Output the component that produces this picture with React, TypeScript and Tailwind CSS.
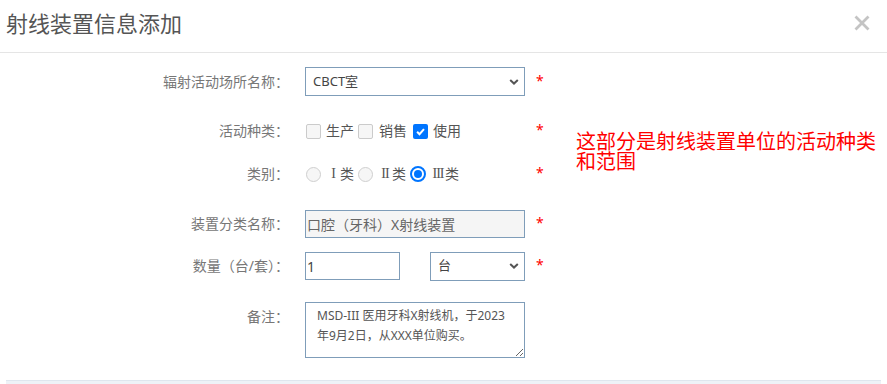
import React, { FC } from 'react';

const FONT = { fontFamily: '"Noto Sans", "Noto Sans CJK SC", sans-serif' };

const Req: FC = () => (
  <span className="ml-[11px] text-[14px] leading-[20px] text-[#ff0000] self-center -mt-[2px]">*</span>
);

const Label: FC<{ children: React.ReactNode; className?: string }> = ({ children, className }) => (
  <div className={`w-[289px] shrink-0 text-right text-[14px] leading-[20px] text-[#777777] ${className || ''}`}>
    {children}
  </div>
);

const CheckBox: FC<{ checked?: boolean }> = ({ checked }) =>
  checked ? (
    <span className="w-[15px] h-[15px] rounded-[2px] bg-[#0075ff] flex items-center justify-center shrink-0">
      <svg width="11" height="11" viewBox="0 0 12 12">
        <path d="M2.3 6.3 L4.9 8.9 L9.8 3.4" stroke="white" strokeWidth="2.2" fill="none" />
      </svg>
    </span>
  ) : (
    <span className="block w-[15px] h-[15px] rounded-[2px] border border-[#cbcbcb] bg-[#f6f6f6] shrink-0" />
  );

const Radio: FC<{ checked?: boolean }> = ({ checked }) =>
  checked ? (
    <span className="w-[16px] h-[16px] rounded-full border-2 border-[#0075ff] bg-white flex items-center justify-center shrink-0">
      <span className="block w-[8px] h-[8px] rounded-full bg-[#0075ff]" />
    </span>
  ) : (
    <span className="block w-[15px] h-[15px] rounded-full border border-[#cfcfcf] bg-[#f6f6f6] shrink-0" />
  );

// roman numerals drawn as serif letters, each in a fixed cell like a full-width glyph
const Roman: FC<{ n: string; w: string }> = ({ n, w }) => (
  <span
    className={`inline-block ${w} text-center tracking-[-1px]`}
    style={{ fontFamily: '"Liberation Serif", serif' }}
  >
    {n}
  </span>
);

const Chevron: FC = () => (
  <svg
    width="10"
    height="7"
    viewBox="0 0 10 7"
    className="absolute right-[5px] top-1/2 -translate-y-1/2 pointer-events-none"
  >
    <path d="M1.2 1.4 L5 5 L8.8 1.4" stroke="#555" strokeWidth="2" fill="none" />
  </svg>
);

const SelectBox: FC<{ value: string; width: string }> = ({ value, width }) => (
  <div className={`relative h-[29px] ${width} border border-[#7f9db9] bg-white`}>
    <div className="h-full flex items-center pl-[7px] text-[13px] text-[#444444]">{value}</div>
    <Chevron />
  </div>
);

export default function App() {
  return (
    <div className="relative w-[887px] h-[384px] overflow-hidden bg-white" style={FONT}>
      {/* header */}
      <div className="h-[53px] border-b border-[#e5e5e5] flex justify-between items-start">
        <div
          className="pl-[6px] pt-[8px] text-[22px] leading-[28px] text-[#555555]"
          style={{ fontFamily: '"Noto Sans CJK SC", sans-serif' }}
        >
          射线装置信息添加
        </div>
        <svg width="16" height="16" viewBox="0 0 16 16" className="mt-[15px] mr-[17px]">
          <path d="M1.5 1.5 L14.5 14.5 M14.5 1.5 L1.5 14.5" stroke="#c4c4c4" strokeWidth="2.8" />
        </svg>
      </div>

      <div className="flex flex-col pt-[14px]">
        {/* 辐射活动场所名称 */}
        <div className="flex items-center h-[29px]">
          <Label>辐射活动场所名称：</Label>
          <div className="ml-[16px]">
            <SelectBox value="CBCT室" width="w-[220px]" />
          </div>
          <Req />
        </div>

        {/* 活动种类 */}
        <div className="flex items-center h-[28px] mt-[21px]">
          <Label>活动种类：</Label>
          <div className="ml-[16px] w-[220px] flex items-center text-[14px] leading-[20px] text-[#555555]">
            <span className="ml-[1px]"><CheckBox /></span>
            <span className="ml-[5px]">生产</span>
            <span className="ml-[4px]"><CheckBox /></span>
            <span className="ml-[6px]">销售</span>
            <span className="ml-[6px]"><CheckBox checked /></span>
            <span className="ml-[5px]">使用</span>
          </div>
          <Req />
        </div>

        {/* 类别 */}
        <div className="flex items-center h-[28px] mt-[15px]">
          <Label>类别：</Label>
          <div className="ml-[16px] w-[220px] flex items-center text-[14px] leading-[20px] text-[#555555]">
            <span className="ml-[1px]"><Radio /></span>
            <span className="ml-[5px] flex items-center"><Roman n="I" w="w-[14px]" />类</span>
            <span className="ml-[4px]"><Radio /></span>
            <span className="ml-[5px] flex items-center"><Roman n="II" w="w-[14px]" />类</span>
            <span className="ml-[4px]"><Radio checked /></span>
            <span className="ml-[5px] flex items-center"><Roman n="III" w="w-[14px]" />类</span>
          </div>
          <Req />
        </div>

        {/* 装置分类名称 */}
        <div className="flex items-center h-[28px] mt-[22px]">
          <Label>装置分类名称：</Label>
          <div className="ml-[16px] w-[220px] h-[28px] border border-[#7f9db9] bg-[#f5f5f5] flex items-center pl-[1px] text-[14px] text-[#666666]">
            口腔（牙科）X射线装置
          </div>
          <Req />
        </div>

        {/* 数量 */}
        <div className="flex items-center h-[28px] mt-[14px]">
          <Label>数量（台/套）：</Label>
          <div className="ml-[16px] w-[220px] flex items-center justify-between">
            <div className="w-[95px] h-[28px] border border-[#7f9db9] bg-white flex items-center pl-[1px] text-[14px] text-[#444444]">
              1
            </div>
            <SelectBox value="台" width="w-[95px]" />
          </div>
          <Req />
        </div>

        {/* 备注 */}
        <div className="flex items-start mt-[22px]">
          <Label className="mt-[5px]">备注：</Label>
          <textarea
            readOnly
            className="ml-[16px] w-[220px] h-[56px] border border-[#7f9db9] bg-white pl-[11px] pr-[8px] pt-[3px] text-[12px] leading-[20px] text-[#555555] outline-none"
            defaultValue="MSD-III 医用牙科X射线机，于2023年9月2日，从XXX单位购买。"
          />
        </div>

        <div className="mt-[22px] mx-[6px] h-[10px] bg-[#eef2f7] border-t border-[#dfe6ee]" />
      </div>

      {/* annotation */}
      <div
        className="absolute left-[576px] top-[131px] w-[305px] text-[20px] leading-[20px] text-[#ff0000]"
        style={{ fontFamily: '"Noto Sans CJK SC", sans-serif' }}
      >
        这部分是射线装置单位的活动种类和范围
      </div>
    </div>
  );
}
